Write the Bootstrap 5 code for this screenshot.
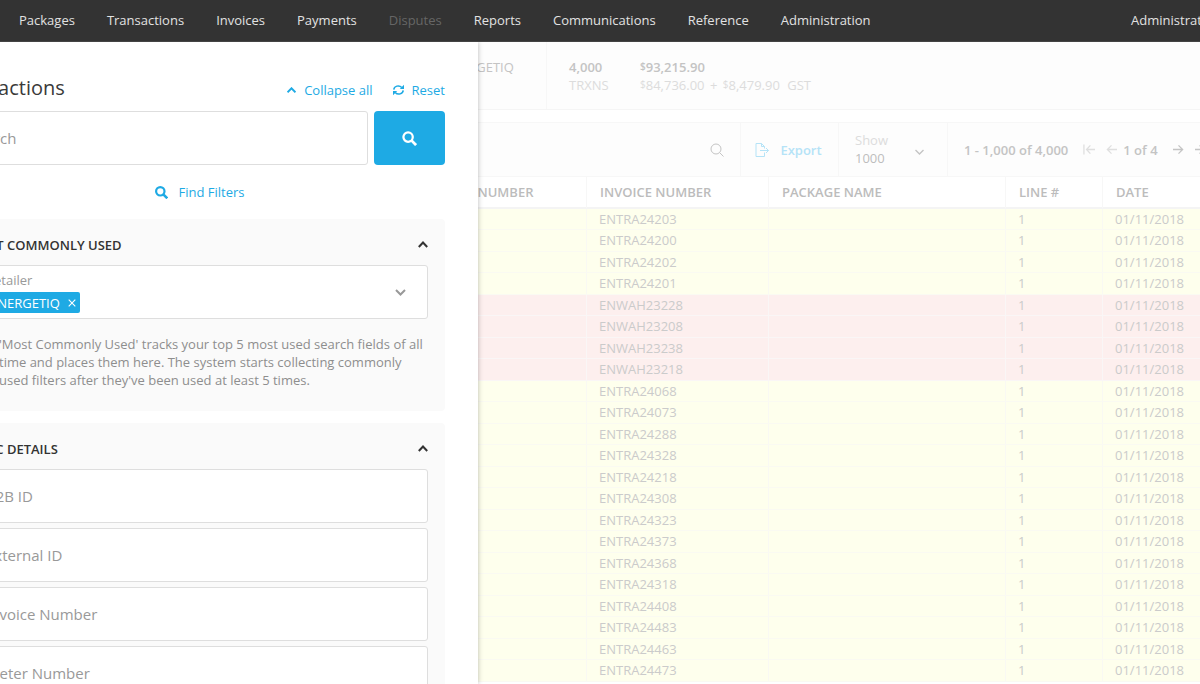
<!DOCTYPE html>
<html lang="en">
<head>
<meta charset="utf-8">
<meta name="viewport" content="width=device-width, initial-scale=1">
<title>Transactions</title>
<link href="https://cdn.jsdelivr.net/npm/bootstrap@5.3.0/dist/css/bootstrap.min.css" rel="stylesheet">
<style>
  :root { --accent: #1eaae4; --line: #f7f7f7; --bleed: 78px; }
  body { font-family: "Open Sans", "Noto Sans", sans-serif; font-size: 13px; line-height: 18px; color: #333; background: #fff; overflow: hidden; }
  svg { display: block; fill: none; stroke: currentColor; }
  a { text-decoration: none; }
  .stage { margin-left: calc(-1 * var(--bleed)); width: calc(100% + var(--bleed) + 50px); height: 100vh; }
  .topbar { background: #333; height: 42px; padding: 0 19px 0 81px; border-bottom: 1px solid #444; }
  .topbar .nav-link { color: #e2e2e2; padding: 0 16px; white-space: nowrap; line-height: 40px; }
  .topbar .nav-link.disabled { color: #666; }

  .drawer { width: 556px; background: #fff; padding: 33px 33px 0; box-shadow: 0 0 5px rgba(0,0,0,.28); z-index: 2; }
  .drawer-head { margin-left: -9px; }
  .drawer-head .acts { gap: 20px; padding-top: 2px; }
  .drawer h1 { font-size: 20px; line-height: 26px; font-weight: 400; color: #3a3a3a; padding-bottom: 2px; }
  .act { border: 0; background: none; padding: 0; color: var(--accent); font-weight: 500; }
  .act.muted { color: #999; }
  .act.dark { color: #333; }
  .field { height: 54px; border: 1px solid #dedede; border-radius: 3px; background: #fff; color: #999; font-size: 15px; padding: 0 13px; width: 100%; }
  .field::placeholder { color: #999; opacity: 1; }
  .field-label { font-size: 13px; line-height: 18px; }
  .search-row { gap: 6px; }
  .find-row { height: 54px; }
  .find-row .act { gap: 10px; }
  .go { width: 71px; height: 54px; background: var(--accent); color: #fff; border-radius: 4px; border: 0; padding: 0; }
  .group-box { background: #fafafa; border-radius: 4px; padding: 0 17px; }
  .group-box + .group-box { margin-top: 12px; }
  .group-box h2 { font-size: 13px; line-height: 18px; font-weight: 600; margin: 0; }
  .group-head { height: 46px; padding-top: 5px; margin-left: -5px; }
  .fields { gap: 5px; }
  .chip { background: var(--accent); color: #fff; font-size: 13px; height: 21px; border-radius: 2px; padding: 0 4px; width: max-content; margin-top: 3px; }
  .hint { color: #8e8e8e; padding: 16px 0 22px 27px; }

  .results { margin-left: 497px; color: #c4c4c4; }
  .summary { height: 68px; background: #fdfdfd; border-bottom: 1px solid #f5f5f5; padding-top: 16px; }
  .summary .who { width: 128px; padding-left: 25px; margin-top: -16px; padding-top: 16px; border-right: 1px solid var(--line); font-weight: 500; }
  .summary .stat { padding-left: 22px; min-width: 71px; font-weight: 600; }
  .summary small { font-size: 10px; line-height: 1; vertical-align: 2px; }
  .faint { color: #dcdcdc; }
  .plus { margin: 0 2px; }
  .tools { height: 55px; margin-top: 12px; background: #fdfdfd; border: solid var(--line); border-width: 1px 0; }
  .tools > * + * { border-left: 1px solid var(--line); }
  .tools .export { width: 98px; gap: 10px; color: #b5e3f7; font-weight: 600; padding-right: 2px; }
  .tools .show { width: 109px; padding: 8px 22px 0 16px; }
  .show select { border: 0; background: none; appearance: none; color: #bdbdbd; padding: 0; width: 60px; height: 18px; display: block; }
  .pager { width: 303px; padding-left: 16px; font-weight: 600; white-space: nowrap; }
  .pager button { border: 0; background: none; padding: 0; color: inherit; }
  .pager button.faint { color: #dfdfdf; }
  .pager .pages { gap: 11px; margin-left: 15px; }
  .pager .current { margin: 0 4px 0 -5px; }

  .grid-table { table-layout: fixed; width: 100%; border-collapse: separate; border-spacing: 0; }
  .grid-table th { height: 32px; padding: 0 13px 1px; color: #bcbcbc; font-weight: 600; border-right: 1px solid var(--line); border-bottom: 2px solid #f4f4f4; white-space: nowrap; background: #fff; }
  .grid-table td { padding: 0 12px 1px; height: 21px; line-height: 18px; color: #cbcbcb; background: #feffed; border-right: 1px solid #f9f9f3; border-bottom: 1px solid #fafaf2; }
  .grid-table tr:nth-child(even) td { height: 22px; }
  .grid-table .late td { background: #fdefee; border-color: #faf6f6; }
  .c-meter { width: 168px; } .c-inv { width: 182px; } .c-pack { width: 237px; } .c-line { width: 97px; }
</style>
</head>
<body>
<div class="stage d-flex flex-column">
  <nav class="topbar d-flex align-items-start flex-shrink-0" aria-label="Main">
    <a class="nav-link" href="#">Packages</a>
    <a class="nav-link" href="#">Transactions</a>
    <a class="nav-link" href="#">Invoices</a>
    <a class="nav-link" href="#">Payments</a>
    <a class="nav-link disabled" aria-disabled="true" href="#">Disputes</a>
    <a class="nav-link" href="#">Reports</a>
    <a class="nav-link" href="#">Communications</a>
    <a class="nav-link" href="#">Reference</a>
    <a class="nav-link" href="#">Administration</a>
    <a class="nav-link ms-auto" href="#">Administrator</a>
  </nav>

  <div class="position-relative flex-grow-1 overflow-hidden">
    <aside class="drawer position-absolute top-0 start-0 h-100 overflow-hidden">
      <div class="drawer-head d-flex align-items-center">
        <h1 class="m-0 me-auto">Transactions</h1>
        <div class="acts d-flex">
        <button class="act d-flex align-items-center gap-2" type="button">
          <svg width="9" height="6" viewBox="0 0 9 6" stroke-width="2"><path d="M.5 5.300 4.500 1.300 8.500 5.300"/></svg>Collapse all</button>
        <button class="act d-flex align-items-center gap-2" type="button">
          <svg width="11" height="12" viewBox="0 0 11 12" stroke-width="1.500"><path d="M.8 5.600C1 2.200 6 .4 8.800 3.600M10.200 6.400C10 9.800 5 11.600 2.200 8.400"/><path d="M11 .8V5H6.800ZM0 11.200V7h4.200Z" fill="currentColor" stroke="none"/></svg>Reset</button>
        </div>
      </div>
      <form class="search-row d-flex mt-2">
        <input class="field" type="search" placeholder="Search" aria-label="Search">
        <button class="go flex-shrink-0 d-flex align-items-center justify-content-center" type="button" aria-label="Search">
          <svg width="15" height="15" viewBox="0 0 16 16" stroke-width="2.400"><circle cx="6.500" cy="6.500" r="5"/><path d="m10 10 5 5" stroke-width="3"/></svg></button>
      </form>
      <div class="find-row d-flex align-items-center justify-content-center">
        <button class="act d-flex align-items-center" type="button">
          <svg width="13" height="13" viewBox="0 0 13 13" stroke-width="2.200"><circle cx="5.300" cy="5.300" r="4.200"/><path d="m8.300 8.300 4 4" stroke-width="2.600"/></svg><span>Find Filters</span></button>
      </div>

      <section class="group-box">
        <div class="group-head d-flex align-items-center justify-content-between">
          <h2>MOST COMMONLY USED</h2>
          <button class="act dark" type="button" aria-label="Collapse"><svg width="10" height="7" viewBox="0 0 10 7" stroke-width="2"><path d="m.8 6 4.200-4.500L9.200 6"/></svg></button>
        </div>
        <div class="field d-flex align-items-center">
          <div class="me-auto">
            <div class="field-label" id="retailer">Retailer</div>
            <div class="chip d-flex align-items-center">ENERGETIQ
              <button class="act text-white ms-2" type="button" aria-label="Remove ENERGETIQ"><svg width="8" height="8" viewBox="0 0 8 8" stroke-width="1.100"><path d="m.7.7 6.600 6.600m0-6.600L.7 7.300"/></svg></button>
            </div>
          </div>
          <button class="act muted me-2" type="button" aria-labelledby="retailer"><svg width="11" height="7" viewBox="0 0 11 7" stroke-width="2"><path d="m1 1 4.500 4.500L10 1"/></svg></button>
        </div>
        <p class="hint m-0">'Most Commonly Used' tracks your top 5 most used search fields of all time and places them here. The system starts collecting commonly used filters after they've been used at least 5 times.</p>
      </section>

      <section class="group-box">
        <div class="group-head d-flex align-items-center justify-content-between">
          <h2>BASIC DETAILS</h2>
          <button class="act dark" type="button" aria-label="Collapse"><svg width="10" height="7" viewBox="0 0 10 7" stroke-width="2"><path d="m.8 6 4.200-4.500L9.200 6"/></svg></button>
        </div>
        <div class="fields d-grid">
          <input class="field" type="text" placeholder="B2B ID" aria-label="B2B ID">
          <input class="field" type="text" placeholder="External ID" aria-label="External ID">
          <input class="field" type="text" placeholder="Invoice Number" aria-label="Invoice Number">
          <input class="field" type="text" placeholder="Meter Number" aria-label="Meter Number">
        </div>
      </section>
    </aside>

    <main class="results">
      <div class="summary d-flex">
        <div class="who">ENERGETIQ</div>
        <div class="stat">4,000<br><span class="faint fw-normal">TRXNS</span></div>
        <div class="stat"><small>$</small>93,215.90<br><span class="faint fw-normal"><small>$</small>84,736.00 <span class="plus">+</span> <small>$</small>8,479.90 <span class="ms-1">GST</span></span></div>
      </div>
      <div class="tools d-flex">
        <div class="flex-grow-1 d-flex align-items-center justify-content-end pe-3">
          <svg width="14" height="14" viewBox="0 0 14 14"><circle cx="6" cy="6" r="5"/><path d="m9.700 9.700 3.800 3.800"/></svg>
        </div>
        <a class="export d-flex align-items-center justify-content-center" href="#">
          <svg width="15" height="14" viewBox="0 0 15 14"><path d="M9.500 9.500v4H1V.5h5.500l3 3v2M6.500.5v3h3M5 7.500h8.500M11 5l2.500 2.500L11 10"/></svg>Export</a>
        <div class="show d-flex align-items-start">
          <div><label class="d-block faint" for="show">Show</label>
            <select id="show"><option>1000</option></select></div>
          <svg class="mt-3 flex-shrink-0" width="9" height="10" viewBox="0 0 9 10" stroke-width="1.400"><path d="m.5 3 4 4 4-4"/></svg>
        </div>
        <div class="pager d-flex align-items-center">
          <span>1 - 1,000 of 4,000</span>
          <div class="pages d-flex align-items-center">
          <button class="faint" type="button" aria-label="First page"><svg width="12" height="11" viewBox="0 0 13 11" stroke-width="1.400"><path d="M1 0v11M13 5.500H4M8 1 3.800 5.500 8 10"/></svg></button>
          <button class="faint" type="button" aria-label="Previous page"><svg width="11" height="11" viewBox="0 0 12 11" stroke-width="1.400"><path d="M12 5.500H1.500M6 1 1.500 5.500 6 10"/></svg></button>
          <span class="current">1 of 4</span>
          <button type="button" aria-label="Next page"><svg width="11" height="11" viewBox="0 0 12 11" stroke-width="1.400"><path d="M0 5.500h10.500M6 1l4.500 4.500L6 10"/></svg></button>
          <button type="button" aria-label="Last page"><svg width="12" height="11" viewBox="0 0 13 11" stroke-width="1.400"><path d="M12 0v11M0 5.500h9M5 1l4.200 4.500L5 10"/></svg></button>
          </div>
        </div>
      </div>
      <table class="grid-table">
        <colgroup><col class="c-meter"><col class="c-inv"><col class="c-pack"><col class="c-line"><col></colgroup>
        <thead><tr><th>METER NUMBER</th><th>INVOICE NUMBER</th><th>PACKAGE NAME</th><th>LINE #</th><th>DATE</th></tr></thead>
        <tbody>
          <tr><td></td><td>ENTRA24203</td><td></td><td>1</td><td>01/11/2018</td></tr>
          <tr><td></td><td>ENTRA24200</td><td></td><td>1</td><td>01/11/2018</td></tr>
          <tr><td></td><td>ENTRA24202</td><td></td><td>1</td><td>01/11/2018</td></tr>
          <tr><td></td><td>ENTRA24201</td><td></td><td>1</td><td>01/11/2018</td></tr>
          <tr class="late"><td></td><td>ENWAH23228</td><td></td><td>1</td><td>01/11/2018</td></tr>
          <tr class="late"><td></td><td>ENWAH23208</td><td></td><td>1</td><td>01/11/2018</td></tr>
          <tr class="late"><td></td><td>ENWAH23238</td><td></td><td>1</td><td>01/11/2018</td></tr>
          <tr class="late"><td></td><td>ENWAH23218</td><td></td><td>1</td><td>01/11/2018</td></tr>
          <tr><td></td><td>ENTRA24068</td><td></td><td>1</td><td>01/11/2018</td></tr>
          <tr><td></td><td>ENTRA24073</td><td></td><td>1</td><td>01/11/2018</td></tr>
          <tr><td></td><td>ENTRA24288</td><td></td><td>1</td><td>01/11/2018</td></tr>
          <tr><td></td><td>ENTRA24328</td><td></td><td>1</td><td>01/11/2018</td></tr>
          <tr><td></td><td>ENTRA24218</td><td></td><td>1</td><td>01/11/2018</td></tr>
          <tr><td></td><td>ENTRA24308</td><td></td><td>1</td><td>01/11/2018</td></tr>
          <tr><td></td><td>ENTRA24323</td><td></td><td>1</td><td>01/11/2018</td></tr>
          <tr><td></td><td>ENTRA24373</td><td></td><td>1</td><td>01/11/2018</td></tr>
          <tr><td></td><td>ENTRA24368</td><td></td><td>1</td><td>01/11/2018</td></tr>
          <tr><td></td><td>ENTRA24318</td><td></td><td>1</td><td>01/11/2018</td></tr>
          <tr><td></td><td>ENTRA24408</td><td></td><td>1</td><td>01/11/2018</td></tr>
          <tr><td></td><td>ENTRA24483</td><td></td><td>1</td><td>01/11/2018</td></tr>
          <tr><td></td><td>ENTRA24463</td><td></td><td>1</td><td>01/11/2018</td></tr>
          <tr><td></td><td>ENTRA24473</td><td></td><td>1</td><td>01/11/2018</td></tr>
        </tbody>
      </table>
    </main>
  </div>
</div>
<script src="https://cdn.jsdelivr.net/npm/bootstrap@5.3.0/dist/js/bootstrap.bundle.min.js"></script>
</body>
</html>
